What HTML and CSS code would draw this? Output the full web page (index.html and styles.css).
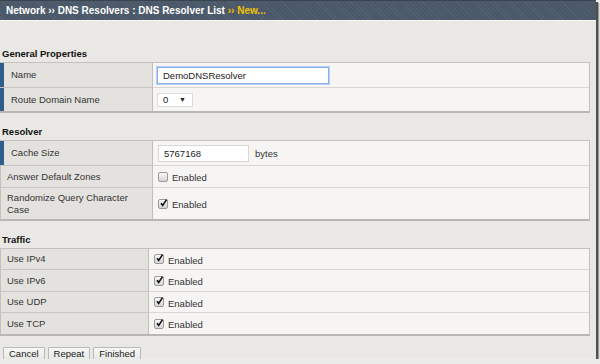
FILE: index.html
```html
<!DOCTYPE html>
<html lang="en">
<head>
    <meta charset="UTF-8">
    <meta name="viewport" content="width=device-width, initial-scale=1.0">
    <title>DNS Resolver List - New</title>
    <link rel="stylesheet" href="styles.css">
</head>
<body>
    <div class="window">
        <header class="topbar">
            Network &rsaquo;&rsaquo; DNS Resolvers : DNS Resolver List <span class="current">&rsaquo;&rsaquo; New...</span>
        </header>

        <div class="section-title first">General Properties</div>
        <div class="props">
            <div class="row h25">
                <div class="label required">Name</div>
                <div class="value"><input type="text" class="text-input name-input" value="DemoDNSResolver"></div>
            </div>
            <div class="row h23 last">
                <div class="label required">Route Domain Name</div>
                <div class="value">
                    <div class="select"><span>0</span><span class="arrow">&#9660;</span></div>
                </div>
            </div>
        </div>

        <div class="section-title">Resolver</div>
        <div class="props">
            <div class="row h25">
                <div class="label required">Cache Size</div>
                <div class="value"><input type="text" class="text-input cache-input" value="5767168"><span class="unit">bytes</span></div>
            </div>
            <div class="row h22">
                <div class="label">Answer Default Zones</div>
                <div class="value"><span class="check"></span><span class="check-text">Enabled</span></div>
            </div>
            <div class="row h31 last">
                <div class="label">Randomize Query Character Case</div>
                <div class="value"><span class="check checked"><svg viewBox="0 0 10 10" width="10" height="10"><path d="M2.2 5.3 L4.1 7.6 L8.4 1.2" fill="none" stroke="#111" stroke-width="1.8"/></svg></span><span class="check-text">Enabled</span></div>
            </div>
        </div>

        <div class="section-title">Traffic</div>
        <div class="props narrow">
            <div class="row h21">
                <div class="label">Use IPv4</div>
                <div class="value"><span class="check checked"><svg viewBox="0 0 10 10" width="10" height="10"><path d="M2.2 5.3 L4.1 7.6 L8.4 1.2" fill="none" stroke="#111" stroke-width="1.8"/></svg></span><span class="check-text">Enabled</span></div>
            </div>
            <div class="row h22">
                <div class="label">Use IPv6</div>
                <div class="value"><span class="check checked"><svg viewBox="0 0 10 10" width="10" height="10"><path d="M2.2 5.3 L4.1 7.6 L8.4 1.2" fill="none" stroke="#111" stroke-width="1.8"/></svg></span><span class="check-text">Enabled</span></div>
            </div>
            <div class="row h21">
                <div class="label">Use UDP</div>
                <div class="value"><span class="check checked"><svg viewBox="0 0 10 10" width="10" height="10"><path d="M2.2 5.3 L4.1 7.6 L8.4 1.2" fill="none" stroke="#111" stroke-width="1.8"/></svg></span><span class="check-text">Enabled</span></div>
            </div>
            <div class="row h21 last">
                <div class="label">Use TCP</div>
                <div class="value"><span class="check checked"><svg viewBox="0 0 10 10" width="10" height="10"><path d="M2.2 5.3 L4.1 7.6 L8.4 1.2" fill="none" stroke="#111" stroke-width="1.8"/></svg></span><span class="check-text">Enabled</span></div>
            </div>
        </div>

        <div class="buttons">
            <button type="button">Cancel</button>
            <button type="button">Repeat</button>
            <button type="button">Finished</button>
        </div>
    </div>
</body>
</html>
```

FILE: styles.css
```css
body {
    margin: 0;
    padding: 0;
    background-color: #ececea;
    font-family: "Liberation Sans", Arial, sans-serif;
    font-size: 9.5px;
    color: #333;
}
.window {
    width: 596px;
    height: 359px;
    overflow: hidden;
    background-color: #e9e8e4;
    box-shadow: 2px 2px 0 #505050, 3px 3px 1px rgba(0,0,0,0.35);
}
.topbar {
    height: 21px;
    line-height: 20px;
    padding-left: 6px;
    box-sizing: border-box;
    border-top: 1px solid #3a4450;
    border-bottom: 1px solid #f7f6f3;
    background-color: #4b5868;
    background-image: repeating-linear-gradient(45deg, #4a5767 0, #4a5767 2px, #516171 2px, #516171 3px);
    color: #fff;
    font-weight: bold;
    font-size: 10px;
    white-space: nowrap;
}
.topbar .current {
    color: #f2c200;
}
.section-title {
    height: 13px;
    line-height: 13px;
    margin: 12px 0 2px;
    padding-left: 2px;
    font-weight: bold;
    color: #111;
}
.section-title.first {
    margin-top: 26px;
}
.props {
    width: 590px;
    box-sizing: border-box;
    border: 1px solid #c2c1bd;
    border-left: none;
    border-bottom: 2px solid #b8b7b3;
}
.row {
    display: flex;
    box-sizing: border-box;
    border-bottom: 1px solid #d8d7d3;
}
.row.last {
    border-bottom: none;
}
.h21 { height: 21px; }
.h22 { height: 22px; }
.h23 { height: 23px; }
.h25 { height: 25px; }
.h31 { height: 31px; }
.label {
    width: 153px;
    flex-shrink: 0;
    box-sizing: border-box;
    display: flex;
    align-items: center;
    padding: 0 8px 0 6px;
    border-left: 1px solid #c2c1bd;
    border-right: 1px solid #c0bfbb;
    background-color: #e3e2de;
    line-height: 12px;
    color: #333;
}
.row .label {
    box-shadow: 0 1px 0 #c6c5c1;
}
.row.last .label {
    box-shadow: none;
}
.label.required {
    border-left: 4px solid #2f5d8c;
    padding-left: 7px;
}
.narrow .label {
    width: 149px;
}
.value {
    flex: 1;
    display: flex;
    align-items: center;
    padding-left: 4px;
    background-color: #f6f5f3;
}
.text-input {
    box-sizing: border-box;
    height: 17px;
    padding: 0 5px;
    border: 1px solid #d6d6d6;
    background: #fff;
    font-family: "Liberation Sans", Arial, sans-serif;
    font-size: 9.5px;
    color: #222;
    outline: none;
}
.name-input {
    width: 172px;
    border: 1px solid #86aef0;
    box-shadow: 0 0 0 1px #b9d0f7;
}
.cache-input {
    width: 91px;
    margin-left: 1px;
}
.unit {
    margin-left: 6px;
    color: #333;
}
.select {
    width: 36px;
    height: 14px;
    box-sizing: border-box;
    display: flex;
    align-items: center;
    justify-content: space-between;
    padding: 0 6px 0 5px;
    border: 1px solid #dcdcdc;
    background: #fff;
    color: #222;
}
.select .arrow {
    font-size: 7px;
}
.check {
    width: 10px;
    height: 10px;
    box-sizing: border-box;
    margin-left: 1px;
    display: inline-flex;
    align-items: center;
    justify-content: center;
    border: 1px solid #9a9a9a;
    border-radius: 2px;
    background-image: linear-gradient(#fafafa, #d4d4d4);
}
.check svg {
    display: block;
    margin: -2px -1px 0 0;
}
.check-text {
    margin-left: 4px;
    padding-top: 2px;
    color: #333;
}
.buttons {
    display: flex;
    gap: 3px;
    margin: 11px 0 0 3px;
}
.buttons button {
    height: 14px;
    padding: 0 5px;
    border: 1px solid #b9b9b7;
    border-radius: 1px;
    background-image: linear-gradient(#f7f7f5, #e6e6e4);
    font-family: "Liberation Sans", Arial, sans-serif;
    font-size: 9.5px;
    line-height: 12px;
    color: #222;
    cursor: pointer;
}
```
